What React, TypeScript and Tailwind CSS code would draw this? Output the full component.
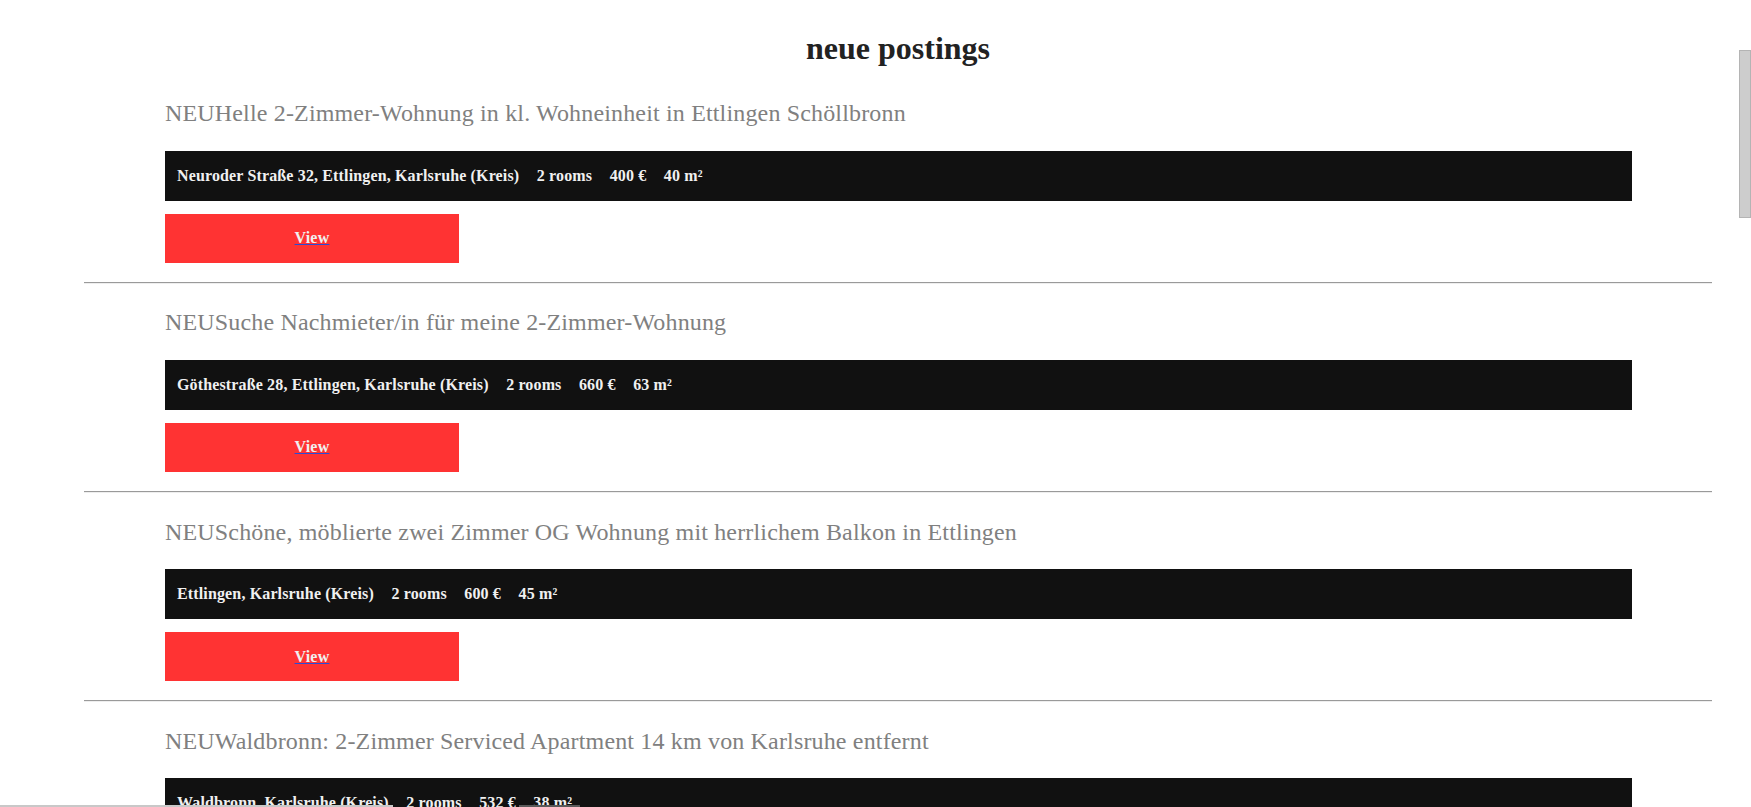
import React from 'react'

type Posting = {
	title: string
	address: string
	rooms: string
	rent: string
	size: string
}

const postings: Posting[] = [
	{
		title: 'Helle 2-Zimmer-Wohnung in kl. Wohneinheit in Ettlingen Schöllbronn',
		address: 'Neuroder Straße 32, Ettlingen, Karlsruhe (Kreis)',
		rooms: '2 rooms',
		rent: '400 €',
		size: '40 m²',
	},
	{
		title: 'Suche Nachmieter/in für meine 2-Zimmer-Wohnung',
		address: 'Göthestraße 28, Ettlingen, Karlsruhe (Kreis)',
		rooms: '2 rooms',
		rent: '660 €',
		size: '63 m²',
	},
	{
		title: 'Schöne, möblierte zwei Zimmer OG Wohnung mit herrlichem Balkon in Ettlingen',
		address: 'Ettlingen, Karlsruhe (Kreis)',
		rooms: '2 rooms',
		rent: '600 €',
		size: '45 m²',
	},
	{
		title: 'Waldbronn: 2-Zimmer Serviced Apartment 14 km von Karlsruhe entfernt',
		address: 'Waldbronn, Karlsruhe (Kreis)',
		rooms: '2 rooms',
		rent: '532 €',
		size: '38 m²',
	},
]

function PostingItem({ posting }: { posting: Posting }) {
	return (
		<div>
			<div className="pl-[81px] pt-[24.4px] pb-[19.3px]">
				<h2 className="text-[24px] leading-[28px] font-normal tracking-[0.16px] text-[#808080] whitespace-nowrap">
					<span>NEU</span>
					{posting.title}
				</h2>
				<div className="mt-[23.6px] flex h-[50px] w-[1467px] items-center gap-[17.5px] bg-[#111111] pl-[12px] text-[16px] font-bold tracking-[0.14px] text-[#f0f0f0] whitespace-nowrap">
					<span>{posting.address}</span>
					<span>{posting.rooms}</span>
					<span>{posting.rent}</span>
					<span>{posting.size}</span>
				</div>
				<a
					href="#"
					className="mt-[13px] flex h-[49px] w-[294px] items-center justify-center bg-[#ff3333] text-[16px] font-bold tracking-[0.2px]"
				>
					<span className="text-[#f0f0f0] underline decoration-[#2a4bd6]">View</span>
				</a>
			</div>
			<div className="h-0 border-t border-b border-t-[#9a9a9a] border-b-[#eeeeee]" />
		</div>
	)
}

export default function App() {
	return (
		<div className="relative h-[807px] overflow-hidden bg-white font-['Liberation_Serif','Times_New_Roman',serif]">
			<div className="ml-[84px] w-[1628px] pt-[30.4px]">
				<h1 className="mb-[7.2px] text-center text-[32px] leading-[37px] font-bold text-[#222222]">
					neue postings
				</h1>
				{postings.map(p => (
					<PostingItem key={p.title} posting={p} />
				))}
			</div>

			{/* scrollbar bits from the screenshot */}
			<div className="absolute right-0 top-[50px] h-[168px] w-[12px] border border-[#b4b4b4] bg-[#cdcdcd]" />
			<div className="absolute bottom-0 left-0 h-[2px] w-[393px] bg-[#c8c8c8]" />
			<div className="absolute bottom-0 left-[519px] h-[2px] w-[61px] bg-[#5a5a5a]" />
		</div>
	)
}
